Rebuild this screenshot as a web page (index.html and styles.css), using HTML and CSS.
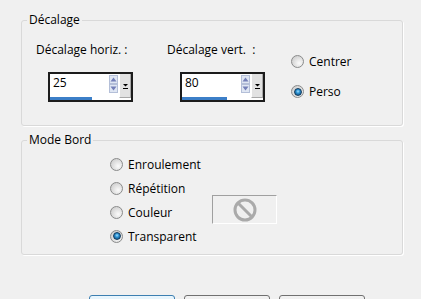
FILE: index.html
```html
<!DOCTYPE html>
<html lang="fr">
<head>
    <meta charset="UTF-8">
    <title>Décalage</title>
    <link rel="stylesheet" href="styles.css">
</head>
<body>

<div class="dialog">
    <fieldset class="group">
        <legend>Décalage</legend>
        <div class="offset-row">
            <div class="spin-col">
                <label>Décalage horiz. :</label>
                <div class="spin">
                    <div class="spin-value">
                        <span class="num">25</span>
                        <span class="bar" style="width:42px"></span>
                    </div>
                    <svg class="arrows" width="9" height="18" viewBox="0 0 9 18">
                        <rect x="0.5" y="0.5" width="8" height="8" fill="#dfe6f3" stroke="#b4bfd8"/>
                        <rect x="0.5" y="9.5" width="8" height="8" fill="#dfe6f3" stroke="#b4bfd8"/>
                        <path d="M1.5 6.5 L4.5 2.5 L7.5 6.5 Z" fill="#7480b8"/>
                        <path d="M1.5 11.5 L4.5 15.5 L7.5 11.5 Z" fill="#7480b8"/>
                    </svg>
                    <div class="drop">
                        <svg width="5" height="5" viewBox="0 0 5 5">
                            <path d="M0 0 H5 L2.5 2.5 Z" fill="#000"/>
                            <rect x="0" y="4" width="5" height="1" fill="#000"/>
                        </svg>
                    </div>
                </div>
            </div>
            <div class="spin-col col-v">
                <label>Décalage vert.&nbsp; :</label>
                <div class="spin">
                    <div class="spin-value">
                        <span class="num">80</span>
                        <span class="bar" style="width:45px"></span>
                    </div>
                    <svg class="arrows" width="9" height="18" viewBox="0 0 9 18">
                        <rect x="0.5" y="0.5" width="8" height="8" fill="#dfe6f3" stroke="#b4bfd8"/>
                        <rect x="0.5" y="9.5" width="8" height="8" fill="#dfe6f3" stroke="#b4bfd8"/>
                        <path d="M1.5 6.5 L4.5 2.5 L7.5 6.5 Z" fill="#7480b8"/>
                        <path d="M1.5 11.5 L4.5 15.5 L7.5 11.5 Z" fill="#7480b8"/>
                    </svg>
                    <div class="drop">
                        <svg width="5" height="5" viewBox="0 0 5 5">
                            <path d="M0 0 H5 L2.5 2.5 Z" fill="#000"/>
                            <rect x="0" y="4" width="5" height="1" fill="#000"/>
                        </svg>
                    </div>
                </div>
            </div>
            <div class="pos-radios">
                <div class="opt"><span class="radio"></span>Centrer</div>
                <div class="opt"><span class="radio on"></span>Perso</div>
            </div>
        </div>
    </fieldset>

    <fieldset class="group mode">
        <legend>Mode Bord</legend>
        <div class="mode-grid">
            <div class="opt"><span class="radio"></span>Enroulement</div>
            <div class="opt"><span class="radio"></span>Répétition</div>
            <div class="opt"><span class="radio"></span>Couleur</div>
            <div class="opt"><span class="radio on"></span>Transparent</div>
            <div class="swatch">
                <svg width="24" height="24" viewBox="0 0 24 24">
                    <circle cx="12" cy="12" r="10" fill="none" stroke="#aaaaaa" stroke-width="3"/>
                    <path d="M5 5 L19 19" stroke="#aaaaaa" stroke-width="3"/>
                </svg>
            </div>
        </div>
    </fieldset>

    <div class="buttons">
        <button class="default" aria-label="OK"></button>
        <button aria-label="Annuler"></button>
        <button aria-label="Aide"></button>
    </div>
</div>

</body>
</html>
```

FILE: styles.css
```css
html, body { margin: 0; height: 299px; overflow: hidden; background: #f0f0f0; }
body { font-family: "Open Sans", "Liberation Sans", sans-serif; font-size: 12px; color: #000; }
.dialog { padding: 12px 18px 0 21px; }

.group { margin: 0; padding: 0 0 0 5px; border: 1px solid #d9d9d9; border-radius: 3px; box-shadow: 1px 1px 0 #fff; }
.group legend { padding: 0 2px; line-height: 16px; }
.mode { margin-top: 6px; }

.offset-row { display: flex; align-items: flex-start; padding: 14px 0 23px 9px; }
.spin-col { width: 131px; }
.spin-col.col-v { width: 124px; }
.spin-col label { display: block; line-height: 15px; margin-bottom: 15px; }
.spin { width: 85px; height: 30px; box-sizing: border-box; margin-left: 12px; border: 2px solid #1c1c1c; background: #fff; display: flex; }
.col-v .spin { margin-left: 13px; }
.spin-value { width: 59px; display: flex; flex-direction: column; }
.num { padding-left: 3px; line-height: 15px; margin-top: 1px; }
.bar { display: block; height: 3px; margin-top: auto; background: #3c7fc8; }
.arrows { margin-top: 1px; display: block; }
.drop { width: 12px; height: 24px; margin: 0 0 0 1px; box-sizing: border-box; background: #e2e2e2; border-left: 1px solid #fff; border-right: 1px solid #a8a8a8; border-bottom: 1px solid #a8a8a8; display: flex; align-items: center; justify-content: center; padding-top: 1px; }
.drop svg { display: block; }

.pos-radios { padding-top: 11px; }
.pos-radios .opt { height: 17px; }
.pos-radios .opt + .opt { margin-top: 13px; }
.opt { display: flex; align-items: center; line-height: 15px; }
.radio { width: 13px; height: 13px; box-sizing: border-box; border-radius: 50%; border: 1px solid #8a8b8b; margin-right: 5px; flex: none; position: relative;
    background: radial-gradient(circle at 65% 65%, #fbfbfb 0, #e2e2e2 45%, #c4c4c4 100%); }
.radio.on::after { content: ""; position: absolute; left: 1.5px; top: 1.5px; width: 8px; height: 8px; box-sizing: border-box; border-radius: 50%; border: 1px solid #123a5c;
    background: radial-gradient(circle at 50% 40%, #9fe0ff 0, #2a8fd0 40%, #0d4674 100%); }

.mode-grid { display: grid; grid-template-columns: 102px 65px; grid-auto-rows: 24px; padding: 4px 0 6px 83px; }
.mode-grid .opt { grid-column: 1; }
.swatch { grid-column: 2; grid-row: 2 / 4; align-self: end; height: 29px; box-sizing: border-box; border-top: 1px solid #a0a0a0; border-left: 1px solid #a0a0a0; border-right: 1px solid #fff; border-bottom: 1px solid #fff; display: flex; align-items: center; justify-content: center; }
.swatch svg { display: block; }

.buttons { display: flex; gap: 9px; margin: 40px 0 0 68px; }
button { width: 86px; height: 23px; font: inherit; border: 1px solid #707070; border-radius: 3px; background: linear-gradient(#f2f2f2, #ebebeb 50%, #dddddd 51%, #cfcfcf); }
button.default { border-color: #3c7fb1; background: linear-gradient(#eaf6fd, #d9f0fc 50%, #bee6fd 51%, #a7d9f5); }
```
